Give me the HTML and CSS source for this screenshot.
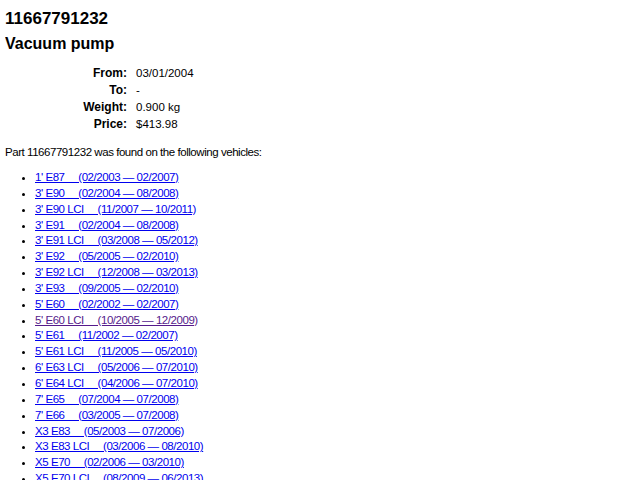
FILE: index.html
```html
<!DOCTYPE html>
<html lang="en">
<head>
<meta charset="UTF-8" />
<title>11667791232 Vacuum pump</title>
<link rel="stylesheet" href="styles.css">
</head>
<body>
  <h1 class="part-number">11667791232</h1>
  <h2 class="part-name">Vacuum pump</h2>

  <!-- Part details -->
  <table class="details">
    <tr><th>From:</th><td>03/01/2004</td></tr>
    <tr><th>To:</th><td>-</td></tr>
    <tr><th>Weight:</th><td>0.900 kg</td></tr>
    <tr><th>Price:</th><td>$413.98</td></tr>
  </table>

  <p class="found">Part 11667791232 was found on the following vehicles:</p>

  <ul class="vehicles">
    <li><a href="#">1' E87&nbsp;&nbsp;&nbsp;&nbsp;&nbsp;(02/2003 &mdash; 02/2007)</a></li>
    <li><a href="#">3' E90&nbsp;&nbsp;&nbsp;&nbsp;&nbsp;(02/2004 &mdash; 08/2008)</a></li>
    <li><a href="#">3' E90 LCI&nbsp;&nbsp;&nbsp;&nbsp;&nbsp;(11/2007 &mdash; 10/2011)</a></li>
    <li><a href="#">3' E91&nbsp;&nbsp;&nbsp;&nbsp;&nbsp;(02/2004 &mdash; 08/2008)</a></li>
    <li><a href="#">3' E91 LCI&nbsp;&nbsp;&nbsp;&nbsp;&nbsp;(03/2008 &mdash; 05/2012)</a></li>
    <li><a href="#">3' E92&nbsp;&nbsp;&nbsp;&nbsp;&nbsp;(05/2005 &mdash; 02/2010)</a></li>
    <li><a href="#">3' E92 LCI&nbsp;&nbsp;&nbsp;&nbsp;&nbsp;(12/2008 &mdash; 03/2013)</a></li>
    <li><a href="#">3' E93&nbsp;&nbsp;&nbsp;&nbsp;&nbsp;(09/2005 &mdash; 02/2010)</a></li>
    <li><a href="#">5' E60&nbsp;&nbsp;&nbsp;&nbsp;&nbsp;(02/2002 &mdash; 02/2007)</a></li>
    <li><a href="#" class="visited">5' E60 LCI&nbsp;&nbsp;&nbsp;&nbsp;&nbsp;(10/2005 &mdash; 12/2009)</a></li>
    <li><a href="#">5' E61&nbsp;&nbsp;&nbsp;&nbsp;&nbsp;(11/2002 &mdash; 02/2007)</a></li>
    <li><a href="#">5' E61 LCI&nbsp;&nbsp;&nbsp;&nbsp;&nbsp;(11/2005 &mdash; 05/2010)</a></li>
    <li><a href="#">6' E63 LCI&nbsp;&nbsp;&nbsp;&nbsp;&nbsp;(05/2006 &mdash; 07/2010)</a></li>
    <li><a href="#">6' E64 LCI&nbsp;&nbsp;&nbsp;&nbsp;&nbsp;(04/2006 &mdash; 07/2010)</a></li>
    <li><a href="#">7' E65&nbsp;&nbsp;&nbsp;&nbsp;&nbsp;(07/2004 &mdash; 07/2008)</a></li>
    <li><a href="#">7' E66&nbsp;&nbsp;&nbsp;&nbsp;&nbsp;(03/2005 &mdash; 07/2008)</a></li>
    <li><a href="#">X3 E83&nbsp;&nbsp;&nbsp;&nbsp;&nbsp;(05/2003 &mdash; 07/2006)</a></li>
    <li><a href="#">X3 E83 LCI&nbsp;&nbsp;&nbsp;&nbsp;&nbsp;(03/2006 &mdash; 08/2010)</a></li>
    <li><a href="#">X5 E70&nbsp;&nbsp;&nbsp;&nbsp;&nbsp;(02/2006 &mdash; 03/2010)</a></li>
    <li><a href="#">X5 E70 LCI&nbsp;&nbsp;&nbsp;&nbsp;&nbsp;(08/2009 &mdash; 06/2013)</a></li>
  </ul>
</body>
</html>
```

FILE: styles.css
```css
body {
  margin: 5px;
  font-family: "Liberation Sans", Arial, sans-serif;
  font-size: 12px;
  color: #000;
  background: #fff;
}

.part-number {
  font-size: 17px;
  margin: 4px 0 6px;
}

.part-name {
  font-size: 16px;
  margin: 0 0 12px;
}

.details {
  border-collapse: collapse;
  margin-left: 10px;
}
.details th,
.details td {
  line-height: 15px;
  padding: 1px 0;
}
.details th {
  width: 112px;
  text-align: right;
  padding-right: 9px;
}
.details td {
  font-size: 11.5px;
}

/* body copy below the table is set a touch tighter */
.found,
.vehicles {
  font-size: 11.5px;
  letter-spacing: -0.45px;
  line-height: 16px;
}

.found {
  margin: 11px 0 10px;
}

.vehicles {
  margin: 0;
  padding-left: 30px;
  line-height: 15.85px;
}
.vehicles a {
  color: #00e;
}
.vehicles a.visited {
  color: #551a8b;
}
```
